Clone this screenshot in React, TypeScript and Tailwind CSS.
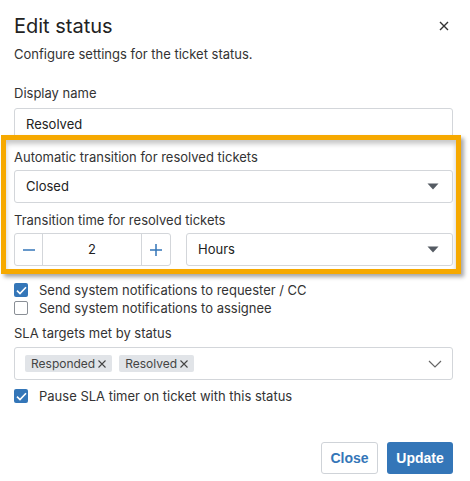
import React from 'react';

const Caret: React.FC = () => (
  <svg width="12" height="7" viewBox="0 0 12 7" className="shrink-0">
    <path d="M0.5 0.5h11L6 6.5z" fill="#555b63" />
  </svg>
);

const Check: React.FC<{ checked?: boolean }> = ({ checked }) =>
  checked ? (
    <span className="flex h-[14px] w-[14px] shrink-0 items-center justify-center rounded-[2px] bg-[#3476b8]">
      <svg width="11" height="9" viewBox="0 0 11 9">
        <path d="M1 4.6l3 3L10 1.2" fill="none" stroke="#fff" strokeWidth="1.6" />
      </svg>
    </span>
  ) : (
    <span className="h-[14px] w-[14px] shrink-0 rounded-[2px] border border-[#8a8f96] bg-white" />
  );

const Tag: React.FC<{ label: string }> = ({ label }) => (
  <span className="flex h-[17px] items-center gap-[3px] rounded-[2px] bg-[#e1e4e8] px-[6px] text-[12px] text-[#444]">
    {label}
    <svg width="8" height="8" viewBox="0 0 8 8">
      <path d="M0.5 0.5l7 7M7.5 0.5l-7 7" stroke="#444" strokeWidth="1.1" />
    </svg>
  </span>
);

const App: React.FC = () => {
  return (
    <div
      className="relative h-[481px] w-[470px] bg-white pr-[17px] pl-[14px] text-[#222]"
      style={{ fontFamily: 'Inter, "Noto Sans", sans-serif' }}
    >
      <div className="flex items-start justify-between pt-[12px]">
        <h1 className="text-[20px] leading-[28px] font-normal text-[#222]">Edit status</h1>
        <svg width="10" height="10" viewBox="0 0 10 10" className="mt-[9px] mr-[4px]">
          <path d="M1 1l8 8M9 1L1 9" stroke="#333" strokeWidth="1.4" />
        </svg>
      </div>
      <p className="mt-[4px] text-[13px] leading-[20px] text-[#333]">Configure settings for the ticket status.</p>

      <div className="mt-[19px] text-[13px] leading-[20px] text-[#333]">Display name</div>
      <div className="mt-[5px] flex h-[33px] items-center rounded-[3px] border border-[#d3d6da] px-[11px] text-[13px] text-[#222]">
        Resolved
      </div>

      {/* highlight frame drawn over the transition fields */}
      <div className="relative z-10 -mt-[6px] -mr-[8px] -ml-[13px] border-[5px] border-[#f6a900] bg-white pt-[7px] pr-[3px] pb-[3px] pl-[8px] shadow-[inset_0_4px_5px_rgba(0,0,0,0.22),3px_3px_4px_rgba(0,0,0,0.35)]">
        <div className="text-[13px] leading-[20px] text-[#333]">Automatic transition for resolved tickets</div>
        <div className="mt-[3px] flex h-[33px] items-center justify-between rounded-[3px] border border-[#d3d6da] pr-[13px] pl-[11px] text-[13px] text-[#222]">
          Closed
          <Caret />
        </div>
        <div className="mt-[7px] text-[13px] leading-[20px] text-[#333]">Transition time for resolved tickets</div>
        <div className="mt-[3px] flex gap-[15px]">
          <div className="flex h-[33px] w-[157px] rounded-[3px] border border-[#d3d6da]">
            <div className="flex w-[28px] items-center justify-center border-r border-[#d3d6da]">
              <svg width="12" height="2" viewBox="0 0 12 2">
                <path d="M0 1h12" stroke="#3476b8" strokeWidth="1.5" />
              </svg>
            </div>
            <div className="flex flex-1 items-center justify-center text-[13px] text-[#222]">2</div>
            <div className="flex w-[29px] items-center justify-center border-l border-[#d3d6da]">
              <svg width="12" height="12" viewBox="0 0 12 12">
                <path d="M0 6h12M6 0v12" stroke="#3476b8" strokeWidth="1.5" />
              </svg>
            </div>
          </div>
          <div className="flex h-[33px] flex-1 items-center justify-between rounded-[3px] border border-[#d3d6da] pr-[13px] pl-[11px] text-[13px] text-[#222]">
            Hours
            <Caret />
          </div>
        </div>
      </div>

      <div className="mt-[7px] flex flex-col text-[13px] leading-[18px] text-[#333]">
        <label className="flex items-center gap-[11px]">
          <Check checked />
          Send system notifications to requester / CC
        </label>
        <label className="flex items-center gap-[11px]">
          <Check />
          Send system notifications to assignee
        </label>
      </div>

      <div className="mt-[6px] text-[13px] leading-[20px] text-[#333]">SLA targets met by status</div>
      <div className="mt-[4px] flex h-[33px] items-center rounded-[3px] border border-[#d3d6da] pr-[10px] pl-[10px]">
        <div className="flex flex-1 gap-[7px]">
          <Tag label="Responded" />
          <Tag label="Resolved" />
        </div>
        <svg width="14" height="8" viewBox="0 0 14 8">
          <path d="M1 1l6 6 6-6" fill="none" stroke="#666" strokeWidth="1.2" />
        </svg>
      </div>

      <label className="mt-[7px] flex items-center gap-[11px] text-[13px] leading-[18px] text-[#333]">
        <Check checked />
        Pause SLA timer on ticket with this status
      </label>

      <div
        className="mt-[37px] flex justify-end gap-[9px] text-[14px] font-bold"
        style={{ fontFamily: '"Liberation Sans", Arial, sans-serif' }}
      >
        <button className="h-[32px] w-[57px] rounded-[3px] border border-[#cfd3d8] bg-white text-[#3476b8]">Close</button>
        <button className="h-[32px] w-[66px] rounded-[3px] bg-[#3476b8] text-white">Update</button>
      </div>
    </div>
  );
};

export default App;
